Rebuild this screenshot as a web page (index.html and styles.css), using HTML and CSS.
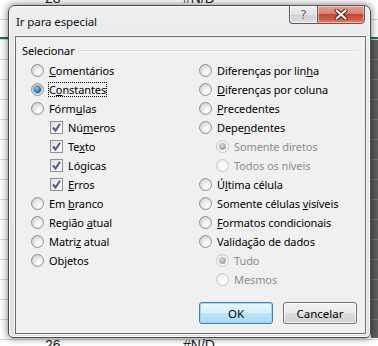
FILE: index.html
```html
<!DOCTYPE html>
<html>
<head>
    <meta charset="utf-8">
    <link rel="stylesheet" href="styles.css">
</head>
<body>
<div class="sheet">
    <div class="sel-line"></div>
    <div class="dark-strip"></div>
    <span class="cell num top-a">28</span>
    <span class="cell top-b">#N/D</span>
    <span class="cell num bot-a">26</span>
    <span class="cell bot-b">#N/D</span>

    <div class="dialog">
        <div class="titlebar">
            <span class="title">Ir para especial</span>
            <div class="caption-buttons">
                <div class="cap help">?</div>
                <div class="cap close">
                    <svg width="14" height="11" viewBox="0 0 14 11">
                        <path d="M2.5 1.5 L11.5 9.5 M11.5 1.5 L2.5 9.5" stroke="#4a1a14" stroke-width="4" stroke-linecap="round"/>
                        <path d="M2.5 1.5 L11.5 9.5 M11.5 1.5 L2.5 9.5" stroke="#ffffff" stroke-width="2.2" stroke-linecap="round"/>
                    </svg>
                </div>
            </div>
        </div>
        <div class="client">
            <div class="group-label">
                <span>Selecionar</span>
                <div class="rule"></div>
            </div>
            <div class="options">
                <ul class="col">
                    <li class="opt"><span class="radio"></span><span class="label"><u>C</u>omentários</span></li>
                    <li class="opt"><span class="radio on"></span><span class="label focus">C<u>o</u>nstantes</span></li>
                    <li class="opt"><span class="radio"></span><span class="label">Fórm<u>u</u>las</span></li>
                    <li class="opt sub-check"><span class="check"><svg width="11" height="11" viewBox="0 0 11 11"><path d="M2 5.5 L4.5 8.5 L9 1.8" fill="none" stroke="#4b5b8c" stroke-width="2"/></svg></span><span class="label">Nú<u>m</u>eros</span></li>
                    <li class="opt sub-check"><span class="check"><svg width="11" height="11" viewBox="0 0 11 11"><path d="M2 5.5 L4.5 8.5 L9 1.8" fill="none" stroke="#4b5b8c" stroke-width="2"/></svg></span><span class="label">Te<u>x</u>to</span></li>
                    <li class="opt sub-check"><span class="check"><svg width="11" height="11" viewBox="0 0 11 11"><path d="M2 5.5 L4.5 8.5 L9 1.8" fill="none" stroke="#4b5b8c" stroke-width="2"/></svg></span><span class="label">Ló<u>g</u>icas</span></li>
                    <li class="opt sub-check"><span class="check"><svg width="11" height="11" viewBox="0 0 11 11"><path d="M2 5.5 L4.5 8.5 L9 1.8" fill="none" stroke="#4b5b8c" stroke-width="2"/></svg></span><span class="label"><u>E</u>rros</span></li>
                    <li class="opt"><span class="radio"></span><span class="label">Em <u>b</u>ranco</span></li>
                    <li class="opt"><span class="radio"></span><span class="label">Região <u>a</u>tual</span></li>
                    <li class="opt"><span class="radio"></span><span class="label">Matri<u>z</u> atual</span></li>
                    <li class="opt"><span class="radio"></span><span class="label">Ob<u>j</u>etos</span></li>
                </ul>
                <ul class="col">
                    <li class="opt"><span class="radio"></span><span class="label">Diferenças por lin<u>h</u>a</span></li>
                    <li class="opt"><span class="radio"></span><span class="label"><u>D</u>iferenças por coluna</span></li>
                    <li class="opt"><span class="radio"></span><span class="label"><u>P</u>recedentes</span></li>
                    <li class="opt"><span class="radio"></span><span class="label">Depe<u>n</u>dentes</span></li>
                    <li class="opt sub-radio disabled"><span class="radio on"></span><span class="label">Somente diretos</span></li>
                    <li class="opt sub-radio disabled"><span class="radio"></span><span class="label">Todos os níveis</span></li>
                    <li class="opt"><span class="radio"></span><span class="label">Ú<u>l</u>tima célula</span></li>
                    <li class="opt"><span class="radio"></span><span class="label">Somente células <u>v</u>isíveis</span></li>
                    <li class="opt"><span class="radio"></span><span class="label"><u>F</u>ormatos condicionais</span></li>
                    <li class="opt"><span class="radio"></span><span class="label">Valida<u>ç</u>ão de dados</span></li>
                    <li class="opt sub-radio disabled"><span class="radio on"></span><span class="label">Tudo</span></li>
                    <li class="opt sub-radio disabled"><span class="radio"></span><span class="label">Mesmos</span></li>
                </ul>
            </div>
            <div class="buttons">
                <button class="btn default">OK</button>
                <button class="btn">Cancelar</button>
            </div>
        </div>
    </div>
</div>
</body>
</html>
```

FILE: styles.css
```css
html, body
{
    margin: 0;
    padding: 0;
}
body
{
    font-family: "Noto Sans", "Open Sans", sans-serif;
    font-size: 11px;
    letter-spacing: -0.1px;
    color: #000;
}
.sheet
{
    position: relative;
    width: 378px;
    height: 346px;
    overflow: hidden;
    background-color: #ffffff;
    background-image: repeating-linear-gradient(to bottom, transparent 0, transparent 19px, #d4d4d4 19px, #d4d4d4 20px);
}
.sel-line
{
    position: absolute;
    left: 0;
    right: 0;
    top: 37px;
    height: 2px;
    background: #217346;
}
.dark-strip
{
    position: absolute;
    left: 371px;
    right: 0;
    top: 40px;
    bottom: 8px;
    background-color: #5d5d5d;
    background-image: repeating-linear-gradient(to bottom, transparent 0, transparent 19px, #777 19px, #777 20px);
}
.cell
{
    position: absolute;
    font-family: "Liberation Sans", sans-serif;
    font-size: 14px;
    letter-spacing: 0;
    color: #222;
}
.top-a { left: 45px; top: -10px; }
.top-b { left: 183px; top: -10px; }
.bot-a { left: 45px; top: 337px; }
.bot-b { left: 183px; top: 337px; }

/* window frame */
.dialog
{
    position: absolute;
    left: 8px;
    top: 5px;
    width: 363px;
    height: 333px;
    box-sizing: border-box;
    border: 1px solid #4a4a4a;
    border-radius: 7px 7px 5px 5px;
    background: linear-gradient(to bottom, #eef0f2 0, #e6e8ea 40px, #dfe1e3 100%);
    box-shadow: inset 0 0 0 1px rgba(255,255,255,0.85), 0 0 7px 1px rgba(0,0,0,0.45);
    padding: 0 4px 3px 6px;
    display: flex;
    flex-direction: column;
}
.titlebar
{
    height: 30px;
    display: flex;
    align-items: flex-start;
    flex-shrink: 0;
}
.title
{
    margin-left: 1px;
    margin-top: 8px;
    font-size: 11.5px;
    color: #111;
}
.caption-buttons
{
    margin-left: auto;
    margin-right: 1px;
    margin-top: -1px;
    display: flex;
}
.cap
{
    height: 19px;
    box-sizing: border-box;
    border: 1px solid #5a5a5a;
    display: flex;
    align-items: center;
    justify-content: center;
}
.help
{
    width: 28px;
    border-right: none;
    border-radius: 0 0 0 4px;
    background: linear-gradient(to bottom, #eef0f2 0, #dfe2e6 50%, #cdd1d6 51%, #d9dde1 100%);
    box-shadow: inset 0 0 0 1px rgba(255,255,255,0.7);
    font-family: "DejaVu Sans", sans-serif;
    font-size: 13px;
    color: #5b6168;
    text-shadow: 0 0 1px #fff, 0 0 2px #fff;
}
.close
{
    width: 48px;
    border-radius: 0 0 4px 0;
    background: linear-gradient(to bottom, #e7a394 0, #d7806e 45%, #c5442f 50%, #d05e48 80%, #e0907a 100%);
    box-shadow: inset 0 0 0 1px rgba(255,220,210,0.55);
}

/* client area */
.client
{
    flex: 1;
    border: 1px solid #6b6b6b;
    background: #f0f0f0;
    box-shadow: 0 0 0 1px rgba(255,255,255,0.7);
    display: flex;
    flex-direction: column;
}
.group-label
{
    display: flex;
    align-items: center;
    height: 16px;
    margin-top: 5px;
    margin-left: 6px;
    margin-right: 7px;
}
.rule
{
    flex: 1;
    height: 1px;
    margin-left: 5px;
    background: #d5dce2;
    box-shadow: 0 1px 0 #fff;
}
.options
{
    display: grid;
    grid-template-columns: 168px 1fr;
    margin-top: 3px;
    padding-left: 15px;
}
.col
{
    list-style-type: none;
    margin: 0;
    padding: 0;
}
.opt
{
    height: 19px;
    display: flex;
    align-items: center;
    white-space: nowrap;
}
.sub-check
{
    padding-left: 19px;
}
.sub-radio
{
    padding-left: 17px;
}
.label
{
    margin-left: 4px;
    line-height: 15px;
    padding: 0 1px;
    margin-right: -1px;
}
.focus
{
    outline: 1px dotted #000;
    outline-offset: -1px;
}
.disabled .label
{
    color: #8d8d8d;
}
.radio
{
    width: 13px;
    height: 13px;
    box-sizing: border-box;
    border-radius: 50%;
    border: 1px solid #8d9196;
    background: radial-gradient(circle at 65% 70%, #ffffff 0, #f0f0f0 35%, #d4d4d4 75%, #c6c6c6 100%);
    display: flex;
    align-items: center;
    justify-content: center;
    flex-shrink: 0;
}
.radio.on::after
{
    content: "";
    width: 7px;
    height: 7px;
    border-radius: 50%;
    background: radial-gradient(circle at 40% 35%, #8ed0f4 0, #2a84c7 45%, #0c4f82 100%);
    box-shadow: 0 0 0 1px rgba(10,60,100,0.35);
}
.disabled .radio
{
    border-color: #c6c8ca;
    background: radial-gradient(circle at 65% 70%, #ffffff 0, #f4f4f4 50%, #e6e6e6 100%);
}
.disabled .radio.on::after
{
    background: radial-gradient(circle at 40% 35%, #d8d8d8 0, #a8a8a8 60%, #8e8e8e 100%);
    box-shadow: none;
}
.check
{
    width: 13px;
    height: 13px;
    box-sizing: border-box;
    border: 1px solid #8e8f8f;
    background: linear-gradient(135deg, #dcdcdc 0, #f4f4f4 60%, #ffffff 100%);
    display: flex;
    align-items: center;
    justify-content: center;
    flex-shrink: 0;
}
.check svg
{
    display: block;
}
.buttons
{
    display: flex;
    justify-content: flex-end;
    gap: 10px;
    margin-top: 13px;
    padding-right: 8px;
}
.btn
{
    width: 74px;
    height: 22px;
    box-sizing: border-box;
    border: 1px solid #707070;
    border-radius: 3px;
    background: linear-gradient(to bottom, #f2f2f2 0, #ebebeb 50%, #dddddd 51%, #cfcfcf 100%);
    box-shadow: inset 0 0 0 1px rgba(255,255,255,0.75);
    font-family: "Noto Sans", "Open Sans", sans-serif;
    font-size: 11.5px;
    color: #000;
    padding: 0;
}
.btn.default
{
    border-color: #3c7fb1;
    background: linear-gradient(to bottom, #eaf6fd 0, #d9f0fc 50%, #bee6fd 51%, #a7d9f5 100%);
    box-shadow: inset 0 0 0 1px #9ed8f6;
}
```
